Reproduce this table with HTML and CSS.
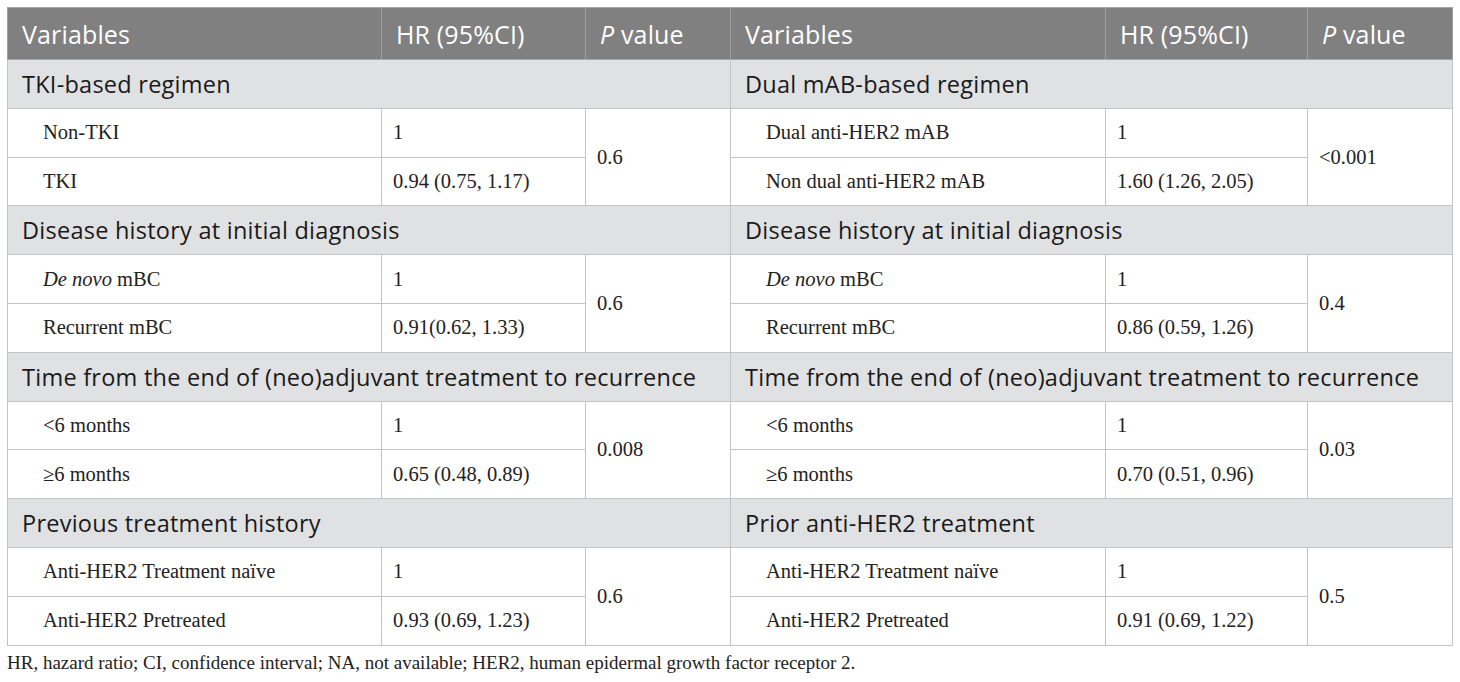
FILE: index.html
```html
<!DOCTYPE html>
<html>
<head>
<meta charset="utf-8">
<link rel="stylesheet" href="styles.css">
</head>
<body>
<div class="wrap">
<table class="hr-table">
  <colgroup>
    <col class="c-var"><col class="c-hr"><col class="c-p">
    <col class="c-var2"><col class="c-hr2"><col class="c-p">
  </colgroup>
  <thead>
    <tr class="head">
      <th>Variables</th><th>HR (95%CI)</th><th><i>P</i> value</th>
      <th>Variables</th><th>HR (95%CI)</th><th><i>P</i> value</th>
    </tr>
  </thead>
  <tbody>
    <tr class="section">
      <td colspan="3">TKI-based regimen</td>
      <td colspan="3">Dual mAB-based regimen</td>
    </tr>
    <tr>
      <td class="var">Non-TKI</td><td>1</td><td rowspan="2">0.6</td>
      <td class="var">Dual anti-HER2 mAB</td><td>1</td><td rowspan="2">&lt;0.001</td>
    </tr>
    <tr>
      <td class="var">TKI</td><td>0.94 (0.75, 1.17)</td>
      <td class="var">Non dual anti-HER2 mAB</td><td>1.60 (1.26, 2.05)</td>
    </tr>
    <tr class="section">
      <td colspan="3">Disease history at initial diagnosis</td>
      <td colspan="3">Disease history at initial diagnosis</td>
    </tr>
    <tr>
      <td class="var"><i>De novo</i> mBC</td><td>1</td><td rowspan="2">0.6</td>
      <td class="var"><i>De novo</i> mBC</td><td>1</td><td rowspan="2">0.4</td>
    </tr>
    <tr>
      <td class="var">Recurrent mBC</td><td>0.91(0.62, 1.33)</td>
      <td class="var">Recurrent mBC</td><td>0.86 (0.59, 1.26)</td>
    </tr>
    <tr class="section">
      <td colspan="3">Time from the end of (neo)adjuvant treatment to recurrence</td>
      <td colspan="3">Time from the end of (neo)adjuvant treatment to recurrence</td>
    </tr>
    <tr>
      <td class="var">&lt;6 months</td><td>1</td><td rowspan="2">0.008</td>
      <td class="var">&lt;6 months</td><td>1</td><td rowspan="2">0.03</td>
    </tr>
    <tr>
      <td class="var">≥6 months</td><td>0.65 (0.48, 0.89)</td>
      <td class="var">≥6 months</td><td>0.70 (0.51, 0.96)</td>
    </tr>
    <tr class="section">
      <td colspan="3">Previous treatment history</td>
      <td colspan="3">Prior anti-HER2 treatment</td>
    </tr>
    <tr>
      <td class="var">Anti-HER2 Treatment naïve</td><td>1</td><td rowspan="2">0.6</td>
      <td class="var">Anti-HER2 Treatment naïve</td><td>1</td><td rowspan="2">0.5</td>
    </tr>
    <tr>
      <td class="var">Anti-HER2 Pretreated</td><td>0.93 (0.69, 1.23)</td>
      <td class="var">Anti-HER2 Pretreated</td><td>0.91 (0.69, 1.22)</td>
    </tr>
  </tbody>
</table>
<p class="note">HR, hazard ratio; CI, confidence interval; NA, not available; HER2, human epidermal growth factor receptor 2.</p>
</div>
</body>
</html>
```

FILE: styles.css
```css
html, body {
  margin: 0;
  padding: 0;
  background: #ffffff;
}
.wrap {
  padding: 7px 8px 0 7px;
}
.hr-table {
  width: 1446px;
  border-collapse: collapse;
  table-layout: fixed;
  font-family: "Liberation Serif", "Times New Roman", serif;
  font-size: 20.5px;
  color: #222222;
}
.c-var { width: 374px; }
.c-hr { width: 204px; }
.c-p { width: 145px; }
.c-var2 { width: 375px; }
.c-hr2 { width: 202px; }
.hr-table th,
.hr-table td {
  border: 1px solid #c4c4c4;
  padding: 0 0 0 11px;
  text-align: left;
  vertical-align: middle;
  height: 48.8px;
  box-sizing: border-box;
  white-space: nowrap;
}
.head th {
  background: #808080;
  color: #ffffff;
  font-family: "Open Sans", "Noto Sans", sans-serif;
  font-weight: 400;
  font-size: 25px;
  letter-spacing: 0.15px;
  height: 52px;
  padding-left: 14px;
  border-top-color: #a6a6a6;
  border-bottom-color: #a6a6a6;
  border-left-color: #a0a0a0;
  border-right-color: #a0a0a0;
}
.hr-table .section td {
  background: #e0e1e3;
  font-family: "Open Sans", "Noto Sans", sans-serif;
  font-size: 23.5px;
  letter-spacing: 0.25px;
  color: #1a1a1a;
  padding-left: 14px;
}
.hr-table td.var {
  padding-left: 35px;
}
.note {
  margin: 6px 0 0 0;
  font-family: "Liberation Serif", "Times New Roman", serif;
  font-size: 19px;
  color: #222222;
}
```
